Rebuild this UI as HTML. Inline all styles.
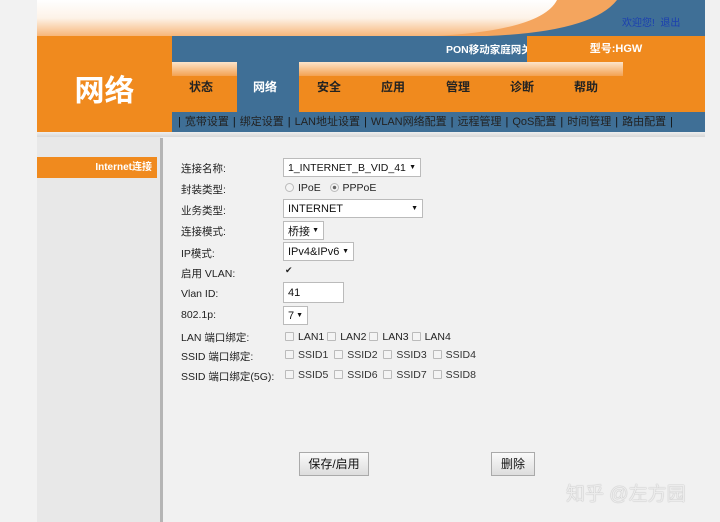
<!DOCTYPE html>
<html><head><meta charset="utf-8"><style>
*{margin:0;padding:0;box-sizing:border-box}
body{width:720px;height:522px;overflow:hidden;background:#f1f1f1;font-family:"Liberation Sans","Noto Sans CJK SC",sans-serif;position:relative;font-size:11px;color:#222}
.a{position:absolute}
.nav span{position:absolute;top:0;height:50px;line-height:50px;width:64px;text-align:center;font-weight:bold;font-size:12px;color:#222}
.sub{color:#111;font-size:11px;white-space:nowrap;line-height:20px}
.sub b{font-weight:normal;color:#222;margin:0 4px}
.lbl{position:absolute;left:181px;font-size:10.5px;color:#222}
.sel{position:absolute;left:283px;height:19px;border:1px solid #bbb;background:#fff;font-size:11px;padding-left:4px;color:#111;display:flex;align-items:center;white-space:nowrap}
.sel i{font-style:normal;font-size:7px;position:absolute;right:4px;top:5px}
.cb{display:inline-block;width:9px;height:9px;border:1px solid #bbb;background:#f4f4f4;vertical-align:-1px;margin-right:4px;border-radius:1px}
.opt{position:absolute;left:285px;font-size:10.5px;white-space:nowrap}
.dim{color:#333}
.btn{position:absolute;height:24px;border:1px solid #aaa;background:linear-gradient(#fafafa,#ddd);font-size:12px;line-height:22px;text-align:center;color:#111}
</style></head><body>
<div class="a" style="left:0;top:0;width:37px;height:522px;background:#f2f2f2"></div>
<div class="a" style="left:37px;top:0;width:124px;height:522px;background:#e8e8e8"></div>
<div class="a" style="left:160px;top:138px;width:3px;height:384px;background:#b5b5b5"></div>
<svg class="a" style="left:37px;top:0" width="668" height="36">
<defs><linearGradient id="g" x1="0" y1="0" x2="0" y2="1"><stop offset="0" stop-color="#fff"/><stop offset="0.5" stop-color="#fdf3e8"/><stop offset="1" stop-color="#f7b67a"/></linearGradient></defs>
<rect width="668" height="36" fill="#3f6f96"/>
<path d="M0 0 H580 Q555 32 450 36 H0Z" fill="#f4a55e"/>
<path d="M0 0 H520 Q505 30 400 36 H0Z" fill="url(#g)"/>
</svg>
<div class="a" style="left:622px;top:14px;font-size:10px;color:#1b3fb0">欢迎您! &nbsp;退出</div>
<div class="a" style="left:37px;top:36px;width:135px;height:96px;background:#f08a1e"></div>
<div class="a" style="left:37px;top:66px;width:135px;text-align:center;font-size:30px;font-weight:bold;color:#fff">网络</div>
<div class="a" style="left:172px;top:36px;width:533px;height:26px;background:#3f6f96"></div>
<div class="a" style="left:446px;top:42px;font-size:10.5px;color:#fff;font-weight:bold">PON移动家庭网关</div>
<div class="a" style="left:527px;top:36px;width:178px;height:26px;background:#f08a1e;color:#fff;font-weight:bold;font-size:11px;text-align:center;line-height:26px">型号:HGW</div>
<div class="a nav" style="left:172px;top:62px;width:533px;height:50px;background:#f08a1e">
<div class="a" style="left:0;top:0;width:451px;height:14px;background:linear-gradient(#fce4cb,#f4a251)"></div>
<div class="a" style="left:65px;top:0;width:62px;height:50px;background:#3f6f96"></div>
<span style="left:-3px">状态</span><span style="left:61px;color:#fff">网络</span><span style="left:125px">安全</span><span style="left:189px">应用</span><span style="left:254px">管理</span><span style="left:318px">诊断</span><span style="left:382px">帮助</span>
</div>
<div class="a sub" style="left:172px;top:112px;width:533px;height:20px;background:#3f6f96;padding-left:6px">|<b>宽带设置</b>|<b>绑定设置</b>|<b>LAN地址设置</b>|<b>WLAN网络配置</b>|<b>远程管理</b>|<b>QoS配置</b>|<b>时间管理</b>|<b>路由配置</b>|</div>
<div class="a" style="left:37px;top:132px;width:668px;height:5px;background:linear-gradient(#eee,#d8d8d8)"></div>
<div class="a" style="left:37px;top:157px;width:120px;height:21px;background:#f08a1e;color:#fff;font-weight:bold;font-size:10px;text-align:right;padding-right:5px;line-height:21px">Internet连接</div>
<div class="lbl" style="top:161px">连接名称:</div>
<div class="sel" style="top:158px;width:138px;font-size:10.5px">1_INTERNET_B_VID_41<i>▼</i></div>
<div class="lbl" style="top:182px">封装类型:</div>
<div class="opt" style="top:182px"><span class="cb" style="border-radius:50%"></span>IPoE &nbsp;&nbsp;<span class="cb" style="border-radius:50%;background:radial-gradient(#666 30%,#f4f4f4 40%)"></span>PPPoE</div>
<div class="lbl" style="top:203px">业务类型:</div>
<div class="sel" style="top:199px;width:140px">INTERNET<i>▼</i></div>
<div class="lbl" style="top:224px">连接模式:</div>
<div class="sel" style="top:221px;width:41px">桥接<i>▼</i></div>
<div class="lbl" style="top:246px">IP模式:</div>
<div class="sel" style="top:242px;width:71px">IPv4&amp;IPv6<i>▼</i></div>
<div class="lbl" style="top:266px">启用 VLAN:</div>
<div class="opt" style="top:265px;font-size:9px">✔</div>
<div class="lbl" style="top:288px">Vlan ID:</div>
<div class="sel" style="top:282px;width:61px;height:21px">41</div>
<div class="lbl" style="top:309px">802.1p:</div>
<div class="sel" style="top:306px;width:25px">7<i>▼</i></div>
<div class="lbl" style="top:330px">LAN 端口绑定:</div>
<div class="opt" style="top:331px"><span class="cb"></span>LAN1 <span class="cb"></span>LAN2 <span class="cb"></span>LAN3 <span class="cb"></span>LAN4</div>
<div class="lbl" style="top:349px">SSID 端口绑定:</div>
<div class="opt dim" style="top:349px"><span class="cb"></span>SSID1 &nbsp;<span class="cb"></span>SSID2 &nbsp;<span class="cb"></span>SSID3 &nbsp;<span class="cb"></span>SSID4</div>
<div class="lbl" style="top:369px">SSID 端口绑定(5G):</div>
<div class="opt dim" style="top:369px"><span class="cb"></span>SSID5 &nbsp;<span class="cb"></span>SSID6 &nbsp;<span class="cb"></span>SSID7 &nbsp;<span class="cb"></span>SSID8</div>
<div class="btn" style="left:299px;top:452px;width:70px">保存/启用</div>
<div class="btn" style="left:491px;top:452px;width:44px">删除</div>
<div class="a" style="left:566px;top:479px;font-size:19px;color:#ececec;text-shadow:0 0 1px #999">知乎 @左方园</div>
</body></html>
